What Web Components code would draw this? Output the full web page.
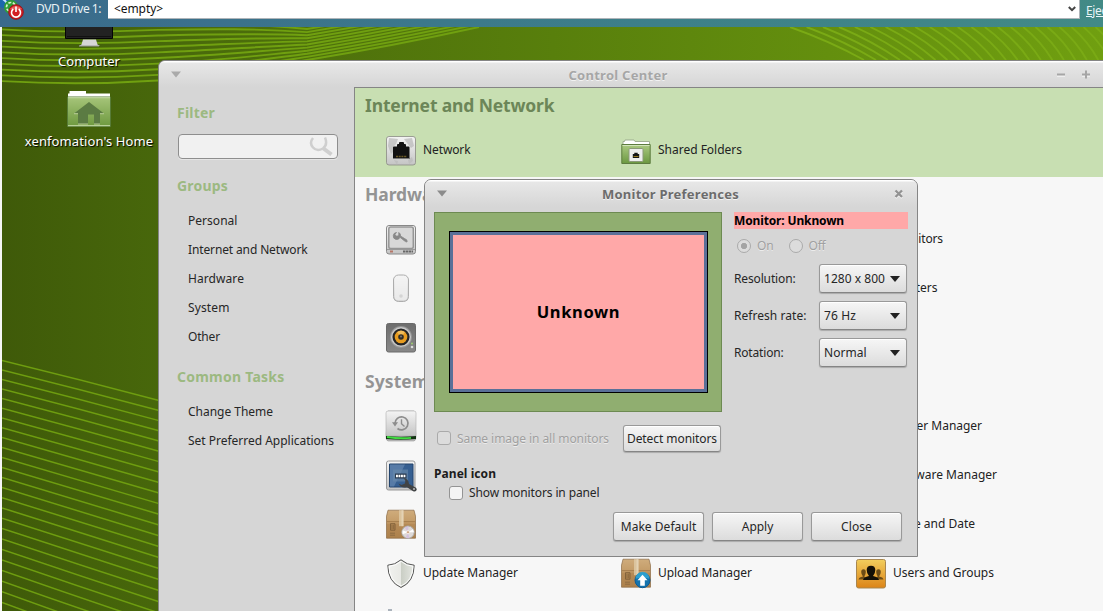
<!DOCTYPE html>
<html lang="en">
<head>
<meta charset="utf-8">
<title>Control Center</title>
<style>
html,body{margin:0;width:1103px;height:611px;overflow:hidden;background:#f5f5f5;font:12px/18px "Noto Sans","Open Sans",sans-serif;color:#262626}
</style>
</head>
<body>
<vm-screen></vm-screen>
<script>
const define=(name,html,after)=>{
  const t=document.createElement('template');t.innerHTML=html;
  customElements.define(name,class extends HTMLElement{
    constructor(){super();this.attachShadow({mode:'open'}).append(t.content.cloneNode(true));}
    connectedCallback(){if(after)after.call(this,this.shadowRoot);}
  });
};

/* Single-line label; "w" is the advance width of the label in pixels. */
define('ui-text','<style>:host{display:inline-block;white-space:pre;flex:none}</style><slot></slot>',function(){
  const w=+this.getAttribute('w');if(!w)return;
  const c=document.createElement('canvas').getContext('2d'),s=getComputedStyle(this);
  c.font=`${s.fontWeight} ${s.fontSize} ${s.fontFamily}`;
  const txt=this.textContent;
  this.style.letterSpacing=((w-c.measureText(txt).width)/txt.length).toFixed(3)+'px';
});

const box=`<defs><linearGradient id="b" x2="0" y2="1"><stop stop-color="#cfac7c"/><stop offset=".45" stop-color="#c39b67"/><stop offset=".5" stop-color="#b58a56"/><stop offset="1" stop-color="#ad814c"/></linearGradient></defs>
<path d="M2 1.500h26l1.500 6v22h-29v-22z" fill="url(#b)" stroke="#8b6a45" stroke-width=".7"/><path d="M1 13h28" stroke="#a37b4b"/><path d="M13 1.500h4.500v16H13z" fill="#dec9a5" opacity=".85"/><path d="M15.500 1.500h2v16h-2z" fill="#e9dcc3" opacity=".6"/>
<path d="M4.500 15h4.500v6.500H4.500z" fill="none" stroke="#7f5f39" stroke-width=".9"/><path d="M6 16v4.500M7.700 16v4.500" stroke="#7f5f39" stroke-width=".8"/><path d="M4 24.500h5M4 26.500h5" stroke="#8d6c43" stroke-width="1"/>`;
const grey=`<defs><linearGradient id="g" x2="0" y2="1"><stop stop-color="#f4f4f4"/><stop offset="1" stop-color="#c4c4c4"/></linearGradient></defs>`;
const icons={
network:grey+`<rect x=".5" y=".5" width="29" height="28.500" rx="2.500" fill="url(#g)" stroke="#8a8a84" stroke-width=".8"/><path d="M3 2l9 1-2 5-3 3 2 3-4 4-3-8zM18 3l8-1 2 8-3 2-4-5zM8 24l4 1-1 4M22 24l4-3 1 4-4 3z" fill="#bbb" opacity=".75"/><path d="M7 22V11.500q0-1 1-1h3V9q0-1 1-1h1V7q0-1 1-1h3q1 0 1 1v1h1q1 0 1 1v1.500h2.500q1 0 1 1V22z" fill="#111"/><path d="M10 20.500h11" stroke="#695825" stroke-width="1.500" stroke-dasharray="2 .7"/><path d="M7 22.500h17" stroke="#777"/>`,
shared:`<defs><linearGradient id="f" x2="0" y2="1"><stop stop-color="#acca82"/><stop offset="1" stop-color="#6b9840"/></linearGradient></defs><path d="M2 10V5.500h1.500L4 4h9l1 1.500h14.500V11z" fill="#fff" stroke="#9aa88c" stroke-width=".9"/><path d="M.8 8.500h28.400V27.500H.8z" fill="url(#f)" stroke="#5d7c3f"/><path d="M1.500 9.500h27" stroke="#d2e3bb"/><rect x="8" y="12.500" width="14" height="13" rx="1" fill="#eee" stroke="#8b9a79"/><path d="M11.800 22v-4h1.500v-1.300h3.400V18h1.500v4z" fill="#161616"/><path d="M12.500 20.500h5" stroke="#94791e"/>`,
hardware:grey+`<rect x=".5" y=".5" width="29" height="28.500" rx="2.500" fill="url(#g)" stroke="#888"/><rect x="2.800" y="2" width="24.500" height="21.500" rx="2" fill="#d8d8d8" stroke="#969696" stroke-width="1.500"/><path d="M1 24.500h28" stroke="#999"/><path d="M10.500 7.500a3.500 3.500 0 1 0 3.500 4.800l4 3.200q3 2.500 3.200.8t-2.700-2.800l-4-2.500a3.500 3.500 0 0 0-1.700-3.500v3l-2 .8-2-1.800z" fill="#888" stroke="#888" stroke-width=".8"/><path d="M4 26.500h3" stroke="#b57768" stroke-width="1.800"/><path d="M17 26.500h10" stroke="#666" stroke-width="2" stroke-dasharray="2.500 .5"/>`,
mouse:grey+`<path d="M8.500 25.500h13" stroke="#ddd" stroke-width="3"/><rect x="7.500" y="1" width="15" height="26.500" rx="5" fill="url(#g)" stroke="#adadad"/><rect x="8.500" y="2" width="13" height="24.500" rx="4" fill="#f4f4f4" opacity=".75"/><circle cx="15" cy="22" r="1.800" fill="#d4d4d4"/>`,
sound:`<defs><linearGradient id="s" x2="0" y2="1"><stop stop-color="#6d6d6d"/><stop offset="1" stop-color="#888"/></linearGradient></defs><rect x=".5" y=".5" width="29" height="28.500" rx="2" fill="url(#s)" stroke="#6a6a6a"/><circle cx="15" cy="14" r="11" fill="#969696"/><circle cx="15" cy="14" r="9.300" fill="#262626" stroke="#c8c8c8" stroke-width="1.500"/><circle cx="15" cy="14" r="6.300" fill="#e79c20"/><path d="M15 14l-4-5q4-3 8 0z" fill="#f1bd5c"/><circle cx="15" cy="14" r="2.800" fill="#302d27"/><circle cx="15" cy="13.500" r="1" fill="#777"/><circle cx="26" cy="20.500" r=".9" fill="#9ed46d"/><circle cx="26" cy="24" r="1.300" fill="#ddd"/>`,
backup:grey+`<g transform="translate(0 -1.500)"><path d="M2 .5h26l2 25q0 5-2 5H2q-2 0-2-5z" fill="#bbb" stroke="#999" stroke-width=".6"/><rect x="0" y=".5" width="30" height="25" rx="2" fill="url(#g)" stroke="#b0b0b0" stroke-width=".6"/><path d="M0 25.500q15 1.500 30 0v3q-15 1.500-30 0z" fill="#123312"/><path d="M1 26.500q14 2 24 .8" fill="none" stroke="#42dc42" stroke-width="1.800"/><path d="M9 13a6.500 6.500 0 1 1 2.500 5" fill="none" stroke="#8d8d8d" stroke-width="1.700"/><path d="M6 11.800h6L9 16z" fill="#8d8d8d"/><path d="M15.500 8.800v4.500l3 2.800" fill="none" stroke="#8d8d8d" stroke-width="1.400"/></g>`,
login:grey+`<g transform="translate(0 -.5)"><rect x=".5" y=".5" width="28.500" height="29" rx="2" fill="url(#g)" stroke="#999"/><path d="M3.500 3.500h23.500v23H3.500z" fill="#365f91" stroke="#24456d"/><path d="M4 4h15L8 26H4z" fill="#7798bd" opacity=".5"/><rect x="7" y="9" width="15" height="12" fill="#6888aa" opacity=".65"/><path d="M9 13h11.500v5H9z" fill="#28394e"/><path d="M10 15.500h9.500" stroke="#fff" stroke-width="2.400" stroke-dasharray="1.900 .6"/><path d="M17.500 17.500q5 .5 5.500 6l7 3.800q1.500 1.500.2 3-1.200 1.300-3 .4l-6.200-4q-6 1.500-8.500-3.700l3 1.500 3.500-1.500.3-3z" fill="#414345"/><circle cx="28" cy="28.500" r="1" fill="#bbb"/></g>`,
sources:`<g transform="translate(0 -1.300)">${box}<circle cx="22" cy="23.500" r="6.200" fill="#dedad8" stroke="#aaa"/><path d="M22 23.500l-5.500 2v-4zM22 23.500l5-3 1 3z" fill="#fff"/><path d="M22 23.500l-2.500 5.500 4 .5zM22 23.500l.5-6-4 1z" fill="#d5c3dd"/><circle cx="22" cy="23.500" r="1.600" fill="#d0a887" stroke="#fff" stroke-width=".7"/></g>`,
update:`<defs><linearGradient id="u"><stop stop-color="#f1f2ef"/><stop offset=".49" stop-color="#e8e9e5"/><stop offset=".51" stop-color="#cacec5"/><stop offset="1" stop-color="#e5e7e2"/></linearGradient></defs><path d="M15 .8Q9 6 1.800 6.200 2 23 15 28.500 28 23 28.200 6.200 21 6 15 .8z" fill="url(#u)" stroke="#555" stroke-width="1"/><path d="M15 2.300Q9.500 7 3 7.300 3.500 22 15 27 26.500 22 27 7.300 20.500 7 15 2.300z" fill="none" stroke="#fff" stroke-width=".9"/>`,
upload:`<g transform="translate(0 -1.300)">${box}<circle cx="21.500" cy="22.500" r="7.500" fill="#1473ad" stroke="#0d5b94"/><path d="M14.500 21a7 7 0 0 1 14 0q-7-2-14 0z" fill="#34b4df" opacity=".7"/><path d="M21.500 17l5 5.500h-2.700V28h-4.600v-5.500h-2.700z" fill="#fff"/></g>`,
users:`<defs><linearGradient id="y" x2="0" y2="1"><stop stop-color="#f2ce5d"/><stop offset="1" stop-color="#dc8418"/></linearGradient></defs><rect x=".5" y=".5" width="29" height="28.500" rx="2" fill="url(#y)" stroke="#a88750"/><path d="M2.500 20.500q.5-2.300 4.500-3-1.800-2-1.800-4.500 0-2.800 2.300-2.800t2.300 2.800q0 2.500-1.500 4.500l3 3zM27.500 20.500q-.5-2.300-4.500-3 1.800-2 1.800-4.500 0-2.800-2.300-2.800T20.200 13q0 2.500 1.500 4.500l-3 3z" fill="#6d4d16"/><path d="M7 21q.5-3 6-4-2.300-2.500-2.300-6 0-4.300 4.300-4.300t4.300 4.300q0 3.500-2.300 6 5.500 1 6 4z" fill="#141107"/>`,
blank:`<path d="M2 2h4" stroke="#5f6f80"/>`
};
define('ui-icon','<style>:host{display:block;width:30px;height:30px;flex:none}svg{display:block;overflow:visible}</style><div></div>',function(r){
  r.querySelector('div').innerHTML=`<svg width="30" height="30" viewBox="0 0 30 30">${icons[this.getAttribute('name')]||''}</svg>`;
});

/* Xen tools toolbar */
define('drive-bar',`<style>
:host{display:flex;height:27px;background:linear-gradient(90deg,#3a6a8c,#3d8089 60%,#428a86);overflow:hidden}
svg{display:block;flex:none}.label{flex:none;width:72px;color:#e9f1f5;line-height:18px}
.field{display:flex;flex:none;box-sizing:border-box;width:972px;height:19px;padding-left:6px;background:#fff;border:solid #aeb4b9;border-width:0 1px 1px 0;line-height:18px;color:#111}
.field svg{margin:6px 3px 0 auto}
a{flex:none;color:#e9f5f8;margin-left:6px;line-height:21px;white-space:pre}a ui-text{text-decoration:underline}</style>
<svg width="36" height="27"><circle cx="4" cy="1" r="7" fill="#1c67ad"/><path d="M0-2q5 1 8 7" stroke="#bfdfff" stroke-width="2" fill="none"/><circle cx="11" cy="7" r="7" fill="#2f9d36"/><circle cx="11" cy="7" r="4.500" fill="none" stroke="#d4f2cf" stroke-width="1.700" stroke-dasharray="3 1.500"/><circle cx="16" cy="12" r="7.300" fill="#d31e24" stroke="#97141a"/><path d="M9.800 9q6-6 12.500 0-6 1-12.500 0z" fill="#ee7773" opacity=".7"/><path d="M13.300 9a4.500 4.500 0 1 0 5.400 0" fill="none" stroke="#fff" stroke-width="1.600"/><path d="M16 6.500V12" stroke="#fff" stroke-width="1.600"/></svg>
<div class="label"><ui-text w="65">DVD Drive 1:</ui-text></div>
<div class="field"><ui-text w="49">&lt;empty&gt;</ui-text><svg width="8" height="8"><path d="M.8 1L4 4.200 7.200 1" fill="none" stroke="#444" stroke-width="2"/></svg></div>
<a><ui-text w="25">Eject</ui-text></a>`);

/* Line pattern of the desktop wallpaper */
define('wall-paper','<style>:host{display:block}svg{display:block}</style><div></div>',function(r){
  let p='';
  for(let k=0;k<12;k++){const y=81.5-5.75*k;
    p+=`<path d="M0 ${y-.5}C50 ${y+2.500} 105 ${y+2.500} 158 ${y-1+k*.12}C215 ${y-4.500+k*.4} 255 ${y-12+k*1.200} 307 ${60-3.100*k}Q395 ${45.500-3.100*k} 479 ${27-3.100*k}"/>`;}
  let q='';let x=790,b=864;
  for(let k=0;k<30;k++){q+=`<path d="M${x} 27Q${(x+b)/2+3} 41 ${b} 60"/>`;x+=Math.max(12,16.6-k*.27);b+=Math.max(10.8,12-k*.03);}
  let s='';
  for(let k=0;k<27;k++){const l=360.500+9.400*k+.0285*k*k,e=400.500+10*k+.031*k*k;s+=`<path d="M2 ${l}Q80 ${(l+e)/2-1+k*.07} 159 ${e}"/>`;}
  r.querySelector('div').innerHTML=`<svg width="1103" height="611"><defs><linearGradient id="w"><stop stop-color="#3f5a09"/><stop offset=".15" stop-color="#48680b"/><stop offset=".5" stop-color="#587f0c"/><stop offset="1" stop-color="#709f10"/></linearGradient></defs><rect x="2" y="27" width="1101" height="584" fill="url(#w)"/><g fill="none" stroke-width="1.900"><svg x="2" y="27" width="1101" height="584" viewBox="2 27 1101 584"><g stroke="#70a010">${p}</g><g stroke="#7aaa15">${q}</g><g stroke="#6e9d10" stroke-width="1.500">${s}</g></svg></g></svg>`;
});

define('desk-icon',`<style>:host{display:flex;flex-direction:column;align-items:center;color:#fff;font-size:13px;text-shadow:1px 1px 1px #000}</style><slot name="picture"></slot><slot></slot>`);

define('window-frame',`<style>
:host{display:flex;flex-direction:column;box-sizing:border-box;border:1px solid #858585;border-radius:7px 7px 0 0;background:#d6d6d6;overflow:hidden}
header{display:flex;align-items:center;flex:none;height:var(--bar,26px);background:linear-gradient(#fff 0 1px,#e7e7e7 2px,#d6d6d6);font-weight:bold;font-size:13px;color:var(--title,#a6a6a6);text-shadow:0 1px #f2f2f2;padding:0 var(--pr,13px) 0 12px;box-sizing:border-box}
.t{flex:1;text-align:center}</style>
<header><svg width="10" height="7"><path d="M0 .5h10L5 6.500z" fill="var(--arrow,#aaa)"/></svg><div class="t"><slot name="title"></slot></div><slot name="controls"></slot></header><slot></slot>`);

define('side-bar',`<style>
:host{display:block;width:195px;box-sizing:border-box;padding:16px 16px 0 18px;flex:none}
h2{margin:0;font-size:14px;line-height:20px;color:#9cb981;font-weight:bold;height:20px}
.search{box-sizing:border-box;height:25px;width:160px;margin:11px 0 17px 1px;border:1.500px solid #8e8e8e;border-radius:4px;background:#f1f1f1;display:flex;justify-content:flex-end;box-shadow:0 1px #e6e6e6}
ul{list-style:none;margin:0;padding:10px 0 16px 11px}li{height:29px;line-height:29px}</style>
<h2><ui-text w="38">Filter</ui-text></h2>
<div class="search"><svg width="29" height="23"><path d="M5 3q-4 5 0 9.500t10 1q5-4 2-11" fill="none" stroke="#cfcfcf" stroke-width="2.500"/><path d="M15.500 13.500l8 6" stroke="#cfcfcf" stroke-width="4"/></svg></div>
<h2><ui-text w="51">Groups</ui-text></h2>
<ul><li><ui-text w="49.500">Personal</ui-text></li><li><ui-text w="119.500">Internet and Network</ui-text></li><li><ui-text w="56">Hardware</ui-text></li><li><ui-text w="41.500">System</ui-text></li><li><ui-text w="32">Other</ui-text></li></ul>
<h2><ui-text w="107.500">Common Tasks</ui-text></h2>
<ul><li><ui-text w="85">Change Theme</ui-text></li><li><ui-text w="146">Set Preferred Applications</ui-text></li></ul>`);

define('app-item',`<style>:host{display:flex;align-items:center;gap:7px;height:49px;width:235px}ui-icon{position:relative;top:1px}</style><ui-icon></ui-icon><slot></slot>`,function(r){
  const i=r.querySelector('ui-icon');i.setAttribute('name',this.getAttribute('icon')||'');i.connectedCallback();
});
define('app-section',`<style>
:host{display:block;padding:5px 0 3px 10px;background:#f7f7f7;color:#222}
.h{height:24px;font:bold 17.500px/24px "Noto Sans",sans-serif;color:var(--h,#949494);margin-bottom:8px}
.g{display:grid;grid-template-columns:235px 235px 235px;margin-left:21px}</style>
<div class="h"><slot name="heading"></slot></div><div class="g"><slot></slot></div>`);

define('control-center',`<style>
:host{display:block}window-frame{width:960px;height:570px;border-right:0}
.body{display:flex;flex:1}.main{flex:1;border:solid #858585;border-width:1px 0 0 1px;background:#f7f7f7;height:540px}
.sel{background:#c8dfb2;--h:#6c8658}.ctl{display:block}</style>
<window-frame style="--pr:27px"><ui-text slot="title" w="99" style="position:relative;left:-1px;top:1px">Control Center</ui-text>
<svg class="ctl" slot="controls" width="34" height="10"><path d="M0 7h8M25 7h8" stroke="#f4f4f4" stroke-width="1.500"/><path d="M0 5.500h8M25 5.500h8M29 1.500v8" stroke="#a6a6a6" stroke-width="2"/></svg>
<div class="body"><side-bar></side-bar><div class="main">
<app-section class="sel"><ui-text slot="heading" w="189.500">Internet and Network</ui-text>
<app-item icon="network"><ui-text w="47.500">Network</ui-text></app-item><app-item icon="shared"><ui-text w="84">Shared Folders</ui-text></app-item></app-section>
<app-section><ui-text slot="heading" w="85">Hardware</ui-text>
<app-item icon="hardware"></app-item><app-item></app-item><app-item><ui-text w="50">Monitors</ui-text></app-item>
<app-item icon="mouse"></app-item><app-item></app-item><app-item><ui-text w="44.500">Printers</ui-text></app-item>
<app-item icon="sound"></app-item></app-section>
<app-section><ui-text slot="heading" w="64">System</ui-text>
<app-item icon="backup"></app-item><app-item></app-item><app-item><ui-text w="89">Power Manager</ui-text></app-item>
<app-item icon="login"></app-item><app-item></app-item><app-item><ui-text w="104">Software Manager</ui-text></app-item>
<app-item icon="sources"></app-item><app-item></app-item><app-item><ui-text w="82">Time and Date</ui-text></app-item>
<app-item icon="update"><ui-text w="95">Update Manager</ui-text></app-item><app-item icon="upload"><ui-text w="94">Upload Manager</ui-text></app-item><app-item icon="users"><ui-text w="101">Users and Groups</ui-text></app-item>
<app-item icon="blank"></app-item></app-section>
</div></div></window-frame>`);

define('push-button',`<style>:host{display:flex;align-items:center;justify-content:center;box-sizing:border-box;width:91px;height:29px;border:1px solid #999;border-bottom-color:#858585;border-radius:3px;background:linear-gradient(#f6f6f6,#dcdcdc);box-shadow:inset 0 1px #fff,0 1px 1px #aaa}</style><slot></slot>`);
define('drop-down',`<style>:host{display:block}push-button{width:88px;justify-content:space-between;padding:0 6px 0 4px}</style><push-button><slot></slot><svg width="10" height="6"><path d="M0 0h10L5 6z" fill="#222"/></svg></push-button>`);
define('check-mark',`<style>:host{display:block;flex:none;box-sizing:border-box;width:14px;height:14px;border:1px solid #949494;border-radius:3px;background:#f4f4f4}:host([off]){border-color:#aaa;background:#dcdcdc}:host([round]){border-radius:50%}:host([dot]){background:radial-gradient(#a4a4a4 2.800px,#dcdcdc 3.500px)}</style>`);

define('monitor-dialog',`<style>
:host{display:block}window-frame{width:494px;height:378px;--bar:27px;--title:#6c6c6c;--arrow:#8c8c8c}
.body{display:flex;gap:12px;padding:5px 9px 0;height:200px}
.screen{box-sizing:border-box;width:288px;height:200px;border:1px solid #6d8a52;background:#90ae70;padding:18px 13px 18px 14px}
.mon{box-sizing:border-box;width:259px;height:162px;border:1px solid #000}.in{box-sizing:border-box;height:100%;border:3px solid #5a7098;background:#ffa8a8;display:flex;align-items:center;justify-content:center;font:bold 16.500px/20px "Noto Sans",sans-serif;color:#000}
.side{width:174px}.name{height:17px;line-height:17px;background:#ffa8a8;font-weight:bold;color:#000}
.off{color:#a0a0a0;text-shadow:0 1px #ececec}
.radios{display:flex;align-items:center;height:28px;padding:3px 0 0 3px;gap:6px}
.row{display:flex;align-items:center;height:37px}.row>span{width:85px}
.same{display:flex;align-items:center;height:27px;margin:13px 0 0 12px;gap:6px}.same push-button{width:98px;height:27px;margin-left:8px}.same check-mark{position:relative;top:-1px}
.panel{font-weight:bold;margin:13px 0 0 9px;height:18px;color:#1c1c1c}
.show{display:flex;align-items:center;gap:6px;margin-left:24px;height:20px}
.actions{display:flex;gap:8px;margin:9px 0 0 188px}</style>
<window-frame><ui-text slot="title" w="137">Monitor Preferences</ui-text>
<svg slot="controls" width="10" height="10"><path d="M1.500 2.500l6.500 6.500M8 2.500L1.500 9" stroke="#f5f5f5" stroke-width="2.200"/><path d="M1.500 1.500L8 8M8 1.500L1.500 8" stroke="#929292" stroke-width="2.300"/></svg>
<div class="body"><div class="screen"><div class="mon"><div class="in"><ui-text w="83.500">Unknown</ui-text></div></div></div>
<div class="side"><div class="name"><ui-text w="110">Monitor: Unknown</ui-text></div>
<div class="radios off"><check-mark round off dot></check-mark><ui-text w="16.500">On</ui-text><check-mark round off style="margin-left:9px"></check-mark><ui-text w="17">Off</ui-text></div>
<div class="row"><span><ui-text w="61.500">Resolution:</ui-text></span><drop-down><ui-text w="61">1280 x 800</ui-text></drop-down></div>
<div class="row"><span><ui-text w="72.500">Refresh rate:</ui-text></span><drop-down><ui-text w="32">76 Hz</ui-text></drop-down></div>
<div class="row"><span><ui-text w="49.500">Rotation:</ui-text></span><drop-down><ui-text w="42.500">Normal</ui-text></drop-down></div></div></div>
<div class="same"><check-mark off></check-mark><ui-text class="off" w="152">Same image in all monitors</ui-text><push-button><ui-text w="90">Detect monitors</ui-text></push-button></div>
<div class="panel"><ui-text w="62">Panel icon</ui-text></div>
<div class="show"><check-mark></check-mark><ui-text w="130.500">Show monitors in panel</ui-text></div>
<div class="actions"><push-button><ui-text w="75.500">Make Default</ui-text></push-button><push-button><ui-text w="31.500">Apply</ui-text></push-button><push-button><ui-text w="31">Close</ui-text></push-button></div>
</window-frame>`);

define('vm-screen',`<style>
:host{display:block;position:relative;width:1103px;height:611px;overflow:hidden}
wall-paper,desk-icon,control-center,monitor-dialog{position:absolute}wall-paper{left:0;top:0}
.pc{left:29px;top:27px;width:120px}.home{left:19px;top:90px;width:140px}svg{display:block}
control-center{left:158px;top:60px}monitor-dialog{left:424px;top:179px}drive-bar{position:relative}</style>
<wall-paper></wall-paper><drive-bar></drive-bar>
<desk-icon class="pc"><svg slot="picture" width="50" height="25"><path d="M1.500-3h47v14.500h-47z" fill="#222" stroke="#050505"/><path d="M3 9.500h44" stroke="#111"/><path d="M19 12.500h13l1.500 5 2.500 1.500H15l2.500-1.500z" fill="#d6d6d6"/><path d="M15 19h20" stroke="#999"/></svg><ui-text w="62">Computer</ui-text></desk-icon>
<desk-icon class="home"><svg slot="picture" width="46" height="42"><defs><linearGradient id="h" x2="0" y2="1"><stop stop-color="#a6c57a"/><stop offset="1" stop-color="#6e993f"/></linearGradient></defs><path d="M2 7V3.500h1.500V1H20v2.500h24V7z" fill="#fff"/><path d="M1.500 7h43v29.500h-43z" fill="url(#h)" stroke="#577b37"/><path d="M2 7.700h42M2 35.700h42" stroke="#cadead"/><path d="M23 12L8 23.500h4V34h10V24.500h6V34h6V23.500h4z" fill="#5b7b43"/><path d="M12 34h10M28 34h6M8 23.700h4M34 23.700h4" stroke="#cadaaa" stroke-width=".8"/></svg><ui-text w="128.500">xenfomation's Home</ui-text></desk-icon>
<control-center></control-center><monitor-dialog></monitor-dialog>`);
</script>
</body>
</html>
